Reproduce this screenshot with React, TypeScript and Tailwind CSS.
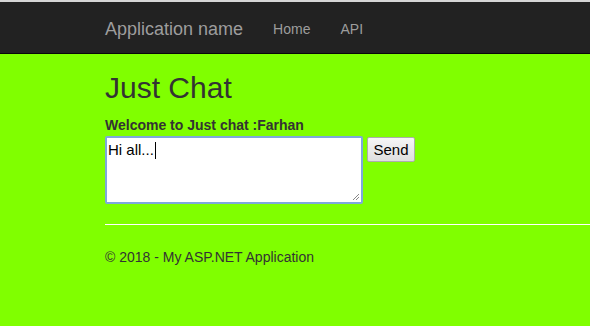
import React from 'react';

export default function App() {
  return (
    <div className="min-h-[326px] bg-[#80ff00] text-[#333] font-['Liberation_Sans',Arial,sans-serif] text-[14px]">
      {/* Top strip + navbar */}
      <div className="h-[2px] bg-[#d6d6d6]" />
      <nav className="h-[52px] bg-[#222] border-b border-[#080808] flex items-center pl-[105px] pt-[3px]">
        <span className="text-[18px] text-[#9d9d9d] pr-[30px]">Application name</span>
        <ul className="flex items-center gap-[30px] text-[14px] text-[#9d9d9d]">
          <li>Home</li>
          <li>API</li>
        </ul>
      </nav>

      {/* Body */}
      <div className="pl-[105px]">
        <h2 className="text-[30px] leading-[33px] mt-[17px] mb-[11px]">Just Chat</h2>
        <label className="block font-bold leading-[20px] h-[21px]">Welcome to Just chat :Farhan</label>
        <div className="flex items-start gap-[4px]">
          <div className="relative w-[258px] h-[68px] bg-white border-2 border-[#7ea8dc] rounded-[2px]">
            <div className="px-[1px] pt-[3px] text-[15px] leading-[18px] text-black flex items-center">
              Hi all...<span className="inline-block w-[1px] h-[17px] bg-black ml-[1px]" />
            </div>
            <svg className="absolute right-[1px] bottom-[1px]" width="9" height="9" viewBox="0 0 9 9">
              <path d="M8 2 L2 8 M8 5 L5 8" stroke="#888" strokeWidth="1" />
            </svg>
          </div>
          <button className="mt-[1px] w-[48px] h-[25px] border border-[#adadad] rounded-[2px] bg-gradient-to-b from-[#f6f6f6] to-[#dedede] text-[15px] text-black leading-none">
            Send
          </button>
        </div>
        <div className="mt-[20px] border-t border-white" />
        <footer className="pt-[22px] leading-[20px]">© 2018 - My ASP.NET Application</footer>
      </div>
    </div>
  );
}
